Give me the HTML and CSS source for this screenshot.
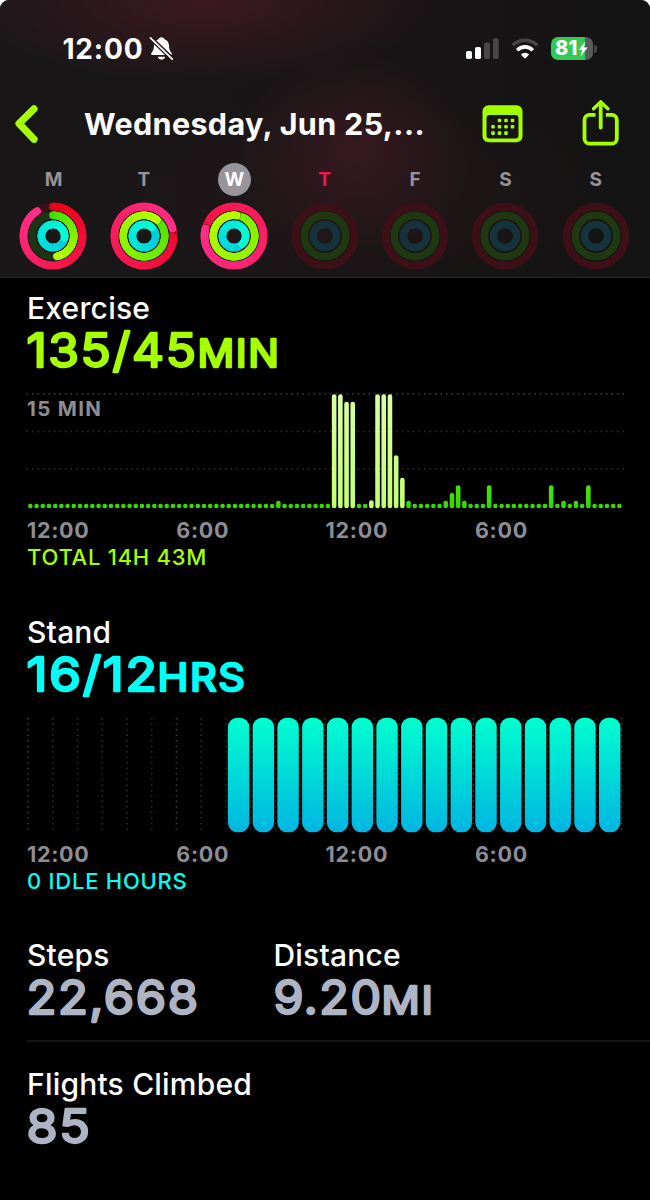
FILE: index.html
```html
<!DOCTYPE html>
<html lang="en">
<head>
<meta charset="utf-8">
<title>Activity</title>
<link rel="stylesheet" href="styles.css">
</head>
<body>
<div class="screen">
  <header class="header">
    <div class="status">
      <span class="clock">12:00</span>
      <svg class="bell" width="25" height="25" viewBox="0 0 26 26">
        <path fill="#fff" d="M13 1.2c-1.7 0-2.8 1-3.1 2.3C6.800 4.500 5.300 7 5.200 10c-.1 4-.8 5.600-2.500 7.300-.9 1-.6 2.400.9 2.400h18.800c1.500 0 1.800-1.400.9-2.400-1.700-1.700-2.400-3.300-2.500-7.300-.1-3-1.600-5.500-4.700-6.500C15.800 2.200 14.700 1.200 13 1.200zM9.200 21.500h7.600c-.3 1.700-1.900 3-3.800 3s-3.500-1.300-3.800-3z"/>
        <path stroke="#271619" stroke-width="4.600" d="M1 1.500 25 24.500"/>
        <path stroke="#fff" stroke-width="1.900" stroke-linecap="round" d="M1.500 2 24.200 24"/>
      </svg>
      <svg class="signal" width="33" height="22" viewBox="0 0 33 22">
        <rect x="0" y="13" width="6" height="8" rx="1.800" fill="#fff"/>
        <rect x="9" y="9" width="6" height="12" rx="1.800" fill="#fff"/>
        <rect x="18" y="4.500" width="6" height="16.500" rx="1.800" fill="#474747"/>
        <rect x="27" y="0.300" width="5.700" height="20.700" rx="1.800" fill="#474747"/>
      </svg>
      <svg class="wifi" width="28" height="22" viewBox="0 0 28 22">
        <path fill="none" stroke="#474747" stroke-width="3.500" d="M1.700 7.200a17.500 17.500 0 0 1 24.600 0"/>
        <path fill="none" stroke="#fff" stroke-width="3.700" d="M6.200 12.200a11 11 0 0 1 15.600 0"/>
        <path fill="#fff" d="M14 20.700 9.800 16.400a6 6 0 0 1 8.400 0z"/>
      </svg>
      <div class="battery">
        <span class="level">81</span>
        <svg class="bolt" width="10" height="16" viewBox="0 0 10 16"><path fill="#fff" d="M7.500.5.500 9h3.800L2.500 15.500 9.700 6.500H5.900z"/></svg>
      </div>
      <i class="battery-tip"></i>
    </div>

    <div class="nav">
      <svg class="back" width="24" height="38" viewBox="0 0 24 38"><path fill="none" stroke="#a6ff00" stroke-width="7.200" stroke-linecap="round" stroke-linejoin="round" d="M19 3.900 4 18.600 19 34.300"/></svg>
      <h1 class="title">Wednesday, Jun 25,...</h1>
      <svg class="calendar" width="41" height="38" viewBox="0 0 41 38">
        <path fill="#a6ff00" fill-rule="evenodd" d="M6.500.300h28a6 6 0 0 1 6 6v25a6 6 0 0 1-6 6h-28a6 6 0 0 1-6-6v-25a6 6 0 0 1 6-6zM7.500 10a3 3 0 0 0-3 3v17.500a3 3 0 0 0 3 3h26a3 3 0 0 0 3-3V13a3 3 0 0 0-3-3z"/>
        <g fill="#a6ff00"><rect x="15.700" y="13.700" width="3.600" height="3.600" rx="1"/><rect x="22.200" y="13.700" width="3.600" height="3.600" rx="1"/><rect x="28.700" y="13.700" width="3.600" height="3.600" rx="1"/><rect x="9.200" y="20" width="3.600" height="3.600" rx="1"/><rect x="15.700" y="20" width="3.600" height="3.600" rx="1"/><rect x="22.200" y="20" width="3.600" height="3.600" rx="1"/><rect x="28.700" y="20" width="3.600" height="3.600" rx="1"/><rect x="9.200" y="26.300" width="3.600" height="3.600" rx="1"/><rect x="15.700" y="26.300" width="3.600" height="3.600" rx="1"/><rect x="22.200" y="26.300" width="3.600" height="3.600" rx="1"/></g>
      </svg>
      <svg class="share" width="38" height="48" viewBox="0 0 38 48">
        <g fill="none" stroke="#a6ff00" stroke-width="3.800" stroke-linecap="round" stroke-linejoin="round">
          <path stroke-linecap="butt" d="M13.500 15.900H7.500a5 5 0 0 0-5 5v18.800a5 5 0 0 0 5 5h22.300a5 5 0 0 0 5-5V20.900a5 5 0 0 0-5-5h-6"/>
          <path d="M18.700 28.500V3.500"/><path d="M11.500 9.800 18.700 2.900l7.200 6.900" stroke-width="3.400"/>
        </g>
      </svg>
    </div>

    <div class="week" id="week"></div>
  </header>

  <main class="content">
    <section class="metric">
      <h2 class="label">Exercise</h2>
      <svg class="value lime" width="300" height="54"><text x="-.5" y="41.500" textLength="171" lengthAdjust="spacingAndGlyphs">135/45</text><text class="unit" x="170.500" y="41.500" textLength="83" lengthAdjust="spacingAndGlyphs">MIN</text></svg>
      <svg class="chart" id="exercise" width="623" height="128" viewBox="0 0 623 128">
        <defs><linearGradient id="pale" x1="0" y1="9" x2="0" y2="123" gradientUnits="userSpaceOnUse"><stop offset="0" stop-color="#dcffa5"/><stop offset="1" stop-color="#c4ff70"/></linearGradient>
        <linearGradient id="green" x1="0" y1="98" x2="0" y2="123" gradientUnits="userSpaceOnUse"><stop offset="0" stop-color="#4fe100"/><stop offset="1" stop-color="#32d900"/></linearGradient></defs>
        <text class="scale" x="0" y="30.700" textLength="74">15 MIN</text>
      </svg>
      <div class="axis"><span>12:00</span><span>6:00</span><span>12:00</span><span>6:00</span></div>
      <p class="note lime">TOTAL 14H 43M</p>
    </section>

    <section class="metric">
      <h2 class="label">Stand</h2>
      <svg class="value cyan" width="300" height="54"><text x="-.5" y="41.500" textLength="132" lengthAdjust="spacingAndGlyphs">16/12</text><text class="unit" x="130.500" y="41.500" textLength="89" lengthAdjust="spacingAndGlyphs">HRS</text></svg>
      <svg class="chart" id="stand" width="623" height="128" viewBox="0 0 623 128">
        <defs><linearGradient id="aqua" x1="0" y1="0" x2="0" y2="1"><stop offset="0" stop-color="#00ffcf"/><stop offset="1" stop-color="#00b5e2"/></linearGradient></defs>
      </svg>
      <div class="axis"><span>12:00</span><span>6:00</span><span>12:00</span><span>6:00</span></div>
      <p class="note cyan">0 IDLE HOURS</p>
    </section>

    <section class="totals">
      <div class="total">
        <h2 class="label">Steps</h2>
        <svg class="value gray" width="240" height="54"><text x="-.5" y="41.500" textLength="173" lengthAdjust="spacingAndGlyphs">22,668</text></svg>
      </div>
      <div class="total">
        <h2 class="label">Distance</h2>
        <svg class="value gray" width="240" height="54"><text x="-.5" y="41.500" textLength="109" lengthAdjust="spacingAndGlyphs">9.20</text><text class="unit" x="107.500" y="41.500" textLength="53" lengthAdjust="spacingAndGlyphs">MI</text></svg>
      </div>
    </section>

    <section class="flights">
      <h2 class="label">Flights Climbed</h2>
      <svg class="value gray" width="240" height="54"><text x="-.5" y="41.500" textLength="65" lengthAdjust="spacingAndGlyphs">85</text></svg>
    </section>
  </main>
</div>
<script src="app.js"></script>
</body>
</html>
```

FILE: styles.css
```css
* { box-sizing: border-box; }

body {
  margin: 0;
  background: #fff;
  font-family: Inter, "Liberation Sans", sans-serif;
}

svg { display: block; flex: none; overflow: visible; }

.screen {
  width: 650px;
  height: 1200px;
  overflow: hidden;
  background: #000;
  border-radius: 9px 9px 0 0;
}

.header {
  height: 278px;
  border-bottom: 1px solid #262424;
  background:
    radial-gradient(ellipse 120px 100px at 357px 150px, rgba(64, 26, 34, .7), rgba(64, 26, 34, 0)),
    radial-gradient(ellipse 240px 85px at 205px 0, rgba(64, 24, 35, .9), rgba(64, 24, 35, 0)),
    radial-gradient(ellipse 280px 100px at 350px 195px, rgba(42, 24, 28, .5), rgba(42, 24, 28, 0)),
    linear-gradient(90deg, #1a1718, #181516 50%, #141313);
}

.status {
  display: flex;
  align-items: center;
  height: 97px;
  padding-left: 62.5px;
}

.clock {
  width: 86px;
  color: #fff;
  font-size: 28px;
  font-weight: 700;
  letter-spacing: .8px;
  white-space: nowrap;
}

.signal { margin-left: 292px; }
.wifi { margin-left: 12px; }

.battery {
  display: flex;
  align-items: center;
  width: 42px;
  height: 23px;
  margin-left: 12px;
  padding-left: 4.5px;
  border-radius: 7px;
  background: linear-gradient(90deg, #35c759 81%, #5a5a5c 81%);
}

.level {
  color: #fff;
  font-size: 20px;
  font-weight: 800;
  line-height: 23px;
  letter-spacing: .2px;
}

.battery-tip {
  width: 3px;
  height: 8px;
  margin-left: 1px;
  border-radius: 0 3px 3px 0;
  background: #474747;
}

.nav {
  display: flex;
  align-items: flex-start;
  height: 66px;
  padding-left: 15px;
}

.back { margin-top: 8px; }

.title {
  width: 398px;
  margin: 7px 0 0 45px;
  color: #fff;
  font-size: 30.5px;
  font-weight: 700;
  line-height: 40px;
  letter-spacing: .35px;
  white-space: nowrap;
}

.calendar { margin-top: 8px; }
.share { margin: 2px 0 0 59px; }

.week {
  display: grid;
  grid-template-columns: repeat(7, 90.4px);
  padding-left: 8.300px;
}

.day {
  display: flex;
  flex-direction: column;
  align-items: center;
}

.day-name {
  width: 33px;
  height: 33px;
  border-radius: 50%;
  color: #97939a;
  font-size: 19px;
  font-weight: 700;
  line-height: 34px;
  text-align: center;
}

.day-name.selected { background: #98949b; color: #fff; }
.day-name.today { color: #fa114f; }

.rings { margin-top: 6px; }

.content { padding: 13px 0 0 27px; }

.metric { height: 323.5px; }

.label {
  margin: 0;
  color: #fff;
  font-size: 30px;
  font-weight: 500;
  line-height: 34px;
  letter-spacing: .2px;
}

.value {
  font-size: 47px;
  font-weight: 400;
  letter-spacing: 1.5px;
  stroke-width: 2.4px;
  stroke-linejoin: round;
}

.value .unit { font-size: 38px; }

.lime { color: #a6ff00; fill: #a6ff00; stroke: #a6ff00; }
.cyan { color: #00fff6; fill: #00fff6; stroke: #00fff6; }
.gray { color: #aeb4c4; fill: #aeb4c4; stroke: #aeb4c4; }

.chart { margin-top: 6px; }

.scale { fill: #8e8d93; font-size: 20.5px; font-weight: 700; }

.grid { fill: none; stroke: #48484a; stroke-width: 1.4; stroke-dasharray: 1.4 4.12; }
.grid.faint { stroke: #333335; }

.axis {
  display: grid;
  grid-template-columns: repeat(4, 149.3px);
  margin-top: 4px;
  color: #8e8d93;
  font-size: 21.5px;
  font-weight: 700;
  line-height: 26px;
  letter-spacing: .7px;
}

.note {
  margin: 1px 0 0;
  font-size: 22px;
  font-weight: 500;
  line-height: 26px;
  letter-spacing: .75px;
}

.totals {
  display: grid;
  grid-template-columns: 246.5px 1fr;
  height: 104px;
  border-bottom: 2px solid #151515;
}

.flights { padding-top: 24.5px; }
```

FILE: app.js
```js
const NS = 'http://www.w3.org/2000/svg';

function add(parent, tag, attrs) {
  const node = document.createElementNS(NS, tag);
  for (const key in attrs) node.setAttribute(key, attrs[key]);
  parent.appendChild(node);
  return node;
}

// Each ring: radius, width, colour at the start and end of the arc, track colour.
const RINGS = [
  { r: 29.5, w: 7.7, from: [232, 0, 20], to: [255, 45, 135], track: '#3b1119', idle: '#3d1017' },
  { r: 20.7, w: 7.5, from: [60, 222, 0], to: [182, 255, 0], track: '#1f3415', idle: '#1f3812' },
  { r: 11.6, w: 7.5, from: [0, 186, 225], to: [0, 255, 215], track: '#12363c', idle: '#16323a' }
];

const DAYS = [
  { name: 'M', progress: [0.91, 0.47, 1.28] },
  { name: 'T', progress: [1.21, 1.11, 1.12] },
  { name: 'W', selected: true, progress: [1.79, 2.02, 1.38] },
  { name: 'T', today: true },
  { name: 'F' }, { name: 'S' }, { name: 'S' }
];

const mix = (a, b, t) => `rgb(${a.map((v, i) => Math.round(v + (b[i] - v) * t)).join()})`;

function drawRing(svg, ring, amount) {
  add(svg, 'circle', { cx: 34, cy: 34, r: ring.r, fill: 'none', 'stroke-width': ring.w, stroke: amount ? ring.track : ring.idle });
  if (!amount) return;
  const start = Math.max(0, amount - 1);
  const steps = 90;
  const point = t => {
    const a = t * 2 * Math.PI;
    return [34 + ring.r * Math.sin(a), 34 - ring.r * Math.cos(a)];
  };
  for (let i = 0; i < steps; i++) {
    const t0 = start + (amount - start) * i / steps;
    const t1 = start + (amount - start) * (i + 1) / steps;
    const [x0, y0] = point(t0);
    const [x1, y1] = point(t1);
    const last = i === steps - 1;
    if (last && amount > 1) {
      const [sx, sy] = point(t1 + 0.006);
      add(svg, 'circle', { cx: sx, cy: sy, r: ring.w / 2, fill: 'rgba(0,0,0,.25)' });
    }
    add(svg, 'path', {
      d: `M${x0} ${y0}L${x1} ${y1}`, fill: 'none', 'stroke-width': ring.w,
      'stroke-linecap': start === 0 || i > 4 ? 'round' : 'butt',
      stroke: mix(ring.from, ring.to, t1 / amount)
    });
  }
}

const week = document.getElementById('week');
DAYS.forEach(day => {
  const cell = document.createElement('div');
  cell.className = 'day';
  const name = document.createElement('span');
  name.className = 'day-name' + (day.selected ? ' selected' : '') + (day.today ? ' today' : '');
  name.textContent = day.name;
  cell.appendChild(name);
  const svg = add(cell, 'svg', { class: 'rings', width: 68, height: 68, viewBox: '0 0 68 68' });
  RINGS.forEach((ring, i) => drawRing(svg, ring, day.progress && day.progress[i]));
  week.appendChild(cell);
});

// Exercise minutes in quarter-hour slots.
const exercise = document.getElementById('exercise');
[9, 46.5, 84].forEach((y, i) => add(exercise, 'path', { class: i ? 'grid faint' : 'grid', d: `M-.5 ${y}H597` }));
const HEIGHTS = { 40: 7.5, 49: 114, 50: 114, 51: 106.5, 52: 106.5, 55: 8, 56: 114, 57: 114, 58: 114, 59: 53, 60: 30.5, 61: 7.5, 67: 7.5, 68: 15.3, 69: 23, 70: 7.5, 74: 23, 84: 23, 86: 7.5, 88: 7.5, 90: 23 };
const WORKOUT = [49, 50, 51, 52, 55, 56, 57, 58, 59, 60];
for (let i = 0; i < 96; i++) {
  const h = HEIGHTS[i] || 4.5;
  add(exercise, 'rect', { x: 1.05 + i * 6.2, y: 123.2 - h, width: 4.6, height: h, rx: 2.2, fill: WORKOUT.includes(i) ? 'url(#pale)' : 'url(#green)' });
}

// Stand hours.
const stand = document.getElementById('stand');
for (let i = 0; i <= 24; i++) {
  add(stand, 'path', { class: i % 6 ? 'grid faint' : 'grid', d: `M${1 + i * 24.74} 9V121.500` });
}
for (let i = 8; i < 24; i++) {
  add(stand, 'rect', { x: 3 + i * 24.74, y: 8.7, width: 21.4, height: 114.5, rx: 9.5, fill: 'url(#aqua)' });
}
```
